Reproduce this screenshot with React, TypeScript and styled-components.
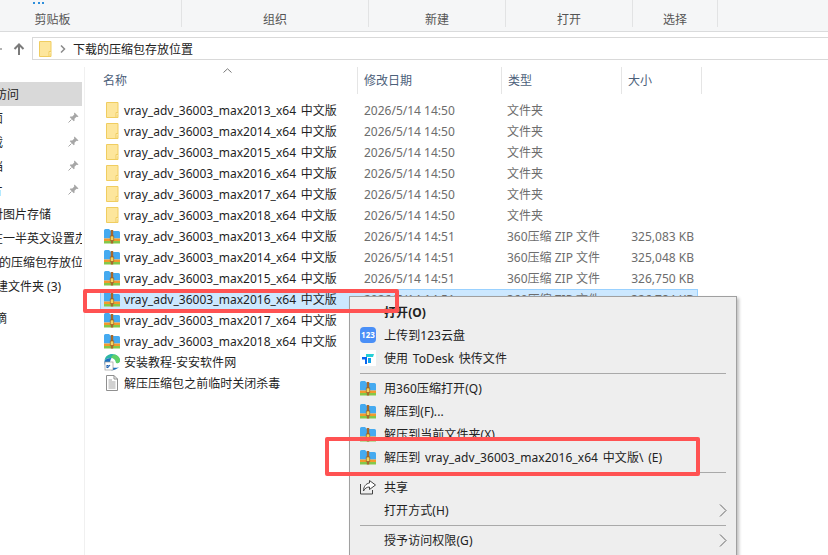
import React from "react";
import styled, { createGlobalStyle } from "styled-components";

const cjk = `"Noto Sans", "Noto Sans CJK SC", sans-serif`;

const folders = [2013, 2014, 2015, 2016, 2017, 2018];

// the last two rows lie under the context menu, so only their names show
const zips = [
    { year: 2013, date: "2026/5/14 14:51", type: "360压缩 ZIP 文件", size: "325,083 KB" },
    { year: 2014, date: "2026/5/14 14:51", type: "360压缩 ZIP 文件", size: "325,048 KB" },
    { year: 2015, date: "2026/5/14 14:51", type: "360压缩 ZIP 文件", size: "326,750 KB" },
    { year: 2016, date: "2026/5/14 14:51", type: "360压缩 ZIP 文件", size: "326,784 KB", selected: true },
    { year: 2017 },
    { year: 2018 },
];

const FolderIcon = () => (
    <svg width="16" height="16" viewBox="0 0 16 16">
        <path d="M2.500 .5H14V15.500H2.500Z" fill="#fde69c" stroke="#f0cd60" />
        <path d="M14 10.500H12V15.500" fill="#fff2c0" stroke="#f0cd60" />
    </svg>
);

const ZipIcon = () => (
    <svg width="16" height="16" viewBox="0 0 16 16">
        <path d="M0 2.500Q0 1 1.500 1H5L7 3H14.500Q16 3 16 4.500V10.500H0Z" fill="#45aaf0" />
        <rect y="10.500" width="16" height="2.500" fill="#f39a2b" />
        <rect y="13" width="16" height="2.500" fill="#84c84a" />
        <rect x="6.800" y="2" width="2.400" height="13.500" fill="#a8682a" />
        <rect x="6.200" y="8" width="3.600" height="4.500" fill="#f7d35e" stroke="#8a5420" strokeWidth=".6" />
    </svg>
);

const EdgeIcon = () => (
    <svg width="16" height="18" viewBox="0 0 16 18">
        <path d="M.5 8C1 3 4.500 1 8 1c4.500 0 8 3 8 6.500 0 2-2 3-4 2.500C12 7 10 5 7 5 4 5 1.500 6 .5 8Z" fill="#2fb6a6" />
        <path d="M7 5c3 0 5 2 5 5 2 .5 4-.5 4-2.500C16 5 14.500 3 12 2 10 1.500 8 2 7 5Z" fill="#5fd068" />
        <path d="M.5 8C0 12 2 16 6 17c3.500 .5 7-.5 9-3-3 1.500-7 1-8.500-1.500C5.500 10 6 7 7.500 5 4 5 1.500 6 .5 8Z" fill="#1a6fc0" />
        <rect x="1" y="9" width="8" height="8" fill="#fff" stroke="#9a9a9a" strokeWidth=".7" />
        <path d="M3 15v-2.500h1.500M3.500 15l2.500-3" fill="none" stroke="#1c5fb0" strokeWidth="1.100" />
    </svg>
);

const DocIcon = () => (
    <svg width="16" height="16" viewBox="0 0 16 16">
        <path d="M2.500 .5H10L13.500 4V15.500H2.500Z" fill="#fff" stroke="#8f8f8f" />
        <path d="M10 .5V4H13.500" fill="none" stroke="#8f8f8f" />
        <path d="M4.500 5H8M4.500 7H11.500M4.500 9H11.500M4.500 11H11.500M4.500 13H11.500" stroke="#a4a4a4" />
    </svg>
);

const PinIcon = () => (
    <svg width="11" height="11" viewBox="0 0 11 11">
        <path d="M6.500 .5 10.500 4.500 9.500 5 8.500 4.800 6.500 6.800 6.500 8.800 5.800 9.300 1.800 5.300 2.300 4.500 4.300 4.500 6.300 2.500 6 1.500Z" fill="#a6a6a6" />
        <path d="M3.500 7.500.5 10.500" stroke="#a6a6a6" />
    </svg>
);

const ToDeskIcon = () => (
    <svg width="16" height="16" viewBox="0 0 16 16">
        <rect width="16" height="16" fill="#fff" />
        <path d="M6 4H14L13 7H6Z" fill="#27cfd6" />
        <path d="M2 7H7V14H5V9.500H2Z" fill="#0a66f0" />
        <path d="M8 8H11V13H8Z" fill="#0fa2e8" />
    </svg>
);

const ShareIcon = () => (
    <svg width="17" height="16" viewBox="0 0 17 16">
        <path d="M.5 5V15H12.500V11" fill="none" stroke="#444" />
        <path d="M9.500 1.500 15.500 6 9.500 10.500V8C7 8 5 9 3.500 12 3.500 7.500 6 4.500 9.500 4Z" fill="#fff" stroke="#444" />
    </svg>
);

const Chevron = () => (
    <svg width="8" height="13" viewBox="0 0 8 13">
        <path d="M1 .5 7 6.500 1 12.500" fill="none" stroke="#666" />
    </svg>
);

const App = () => {
    return (
        <Page>
            <GlobalStyle />

            <Ribbon>
                <RibbonMark />
                <RibbonGroup $width={182} $padRight={76}>剪贴板</RibbonGroup>
                <RibbonGroup $width={187}>组织</RibbonGroup>
                <RibbonGroup $width={137}>新建</RibbonGroup>
                <RibbonGroup $width={127}>打开</RibbonGroup>
                <RibbonGroup $width={85}>选择</RibbonGroup>
            </Ribbon>

            <NavBar>
                <NavArrows>
                    <svg width="32" height="16" viewBox="0 0 32 16">
                        <path d="M0 8H2" stroke="#9a9a9a" strokeWidth="1.500" />
                        <path d="M19 14V3.500M14.500 8 19 3.500 23.500 8" fill="none" stroke="#7b7b7b" strokeWidth="2" />
                    </svg>
                </NavArrows>
                <AddressBox>
                    <FolderIcon />
                    <svg width="6" height="8" viewBox="0 0 6 8">
                        <path d="M1 .5 4.500 4 1 7.500" fill="none" stroke="#8a8a8a" strokeWidth="1.500" />
                    </svg>
                    <AddressText>下载的压缩包存放位置</AddressText>
                </AddressBox>
            </NavBar>

            <Main>
                <Sidebar>
                    <SideItem $offset={-29} $active>快速访问</SideItem>
                    <SideItem $offset={-21}>桌面<Pin><PinIcon /></Pin></SideItem>
                    <SideItem $offset={-21}>下载<Pin><PinIcon /></Pin></SideItem>
                    <SideItem $offset={-21}>文档<Pin><PinIcon /></Pin></SideItem>
                    <SideItem $offset={-21}>图片<Pin><PinIcon /></Pin></SideItem>
                    <SideItem $offset={-9}>对图片存储</SideItem>
                    <SideItem $offset={-9}>在一半英文设置办法</SideItem>
                    <SideItem $offset={-25}>下载的压缩包存放位置</SideItem>
                    <SideItem $offset={-4}>建文件夹 (3)</SideItem>
                    <SideGap />
                    <SideItem $offset={-5}>摘</SideItem>
                </Sidebar>

                <FileArea>
                    <HeaderRow>
                        <SortCaret>
                            <svg width="9" height="5" viewBox="0 0 9 5">
                                <path d="M.5 4.500 4.500 .8 8.500 4.500" fill="none" stroke="#777" />
                            </svg>
                        </SortCaret>
                        <HeaderCell $width={273} $pad={18}>名称</HeaderCell>
                        <HeaderCell $width={144} $pad={6}>修改日期</HeaderCell>
                        <HeaderCell $width={120} $pad={6}>类型</HeaderCell>
                        <HeaderCell $width={80} $pad={6}>大小</HeaderCell>
                    </HeaderRow>

                    <Rows>
                        {folders.map((year) => (
                            <FileRow key={year}>
                                <NameCell>
                                    <FolderIcon />
                                    <FileName>vray_adv_36003_max{year}_x64 中文版</FileName>
                                </NameCell>
                                <DateCell>2026/5/14 14:50</DateCell>
                                <TypeCell>文件夹</TypeCell>
                            </FileRow>
                        ))}
                        {zips.map((zip) => (
                            <FileRow key={zip.year} $selected={zip.selected}>
                                <NameCell>
                                    <ZipIcon />
                                    <FileName>vray_adv_36003_max{zip.year}_x64 中文版</FileName>
                                </NameCell>
                                <DateCell>{zip.date}</DateCell>
                                <TypeCell>{zip.type}</TypeCell>
                                <SizeCell>{zip.size}</SizeCell>
                            </FileRow>
                        ))}
                        <FileRow>
                            <NameCell>
                                <EdgeIcon />
                                <FileName>安装教程-安安软件网</FileName>
                            </NameCell>
                        </FileRow>
                        <FileRow>
                            <NameCell>
                                <DocIcon />
                                <FileName>解压压缩包之前临时关闭杀毒</FileName>
                            </NameCell>
                        </FileRow>
                    </Rows>
                </FileArea>
            </Main>

            <ContextMenu>
                <MenuItem $bold><MenuIcon />打开(O)</MenuItem>
                <MenuItem><MenuIcon><CloudBadge>123</CloudBadge></MenuIcon>上传到123云盘</MenuItem>
                <MenuItem><MenuIcon><ToDeskIcon /></MenuIcon>使用 ToDesk 快传文件</MenuItem>
                <MenuLine />
                <MenuItem><MenuIcon><ZipIcon /></MenuIcon>用360压缩打开(Q)</MenuItem>
                <MenuItem><MenuIcon><ZipIcon /></MenuIcon>解压到(F)...</MenuItem>
                <MenuItem><MenuIcon><ZipIcon /></MenuIcon>解压到当前文件夹(X)</MenuItem>
                <MenuItem><MenuIcon><ZipIcon /></MenuIcon>解压到 vray_adv_36003_max2016_x64 中文版\ (E)</MenuItem>
                <MenuLine />
                <MenuItem><MenuIcon><ShareIcon /></MenuIcon>共享</MenuItem>
                <MenuItem>
                    <MenuIcon />打开方式(H)
                    <MenuArrow><Chevron /></MenuArrow>
                </MenuItem>
                <MenuLine />
                <MenuItem>
                    <MenuIcon />授予访问权限(G)
                    <MenuArrow><Chevron /></MenuArrow>
                </MenuItem>
            </ContextMenu>

            <RowHighlight />
            <MenuHighlight />
        </Page>
    );
};

const GlobalStyle = createGlobalStyle`
    html, body {
        margin: 0;
        padding: 0;
        background: #ffffff;
    }
`;

const Page = styled.div`
    width: 828px;
    height: 555px;
    overflow: hidden;
    position: relative;

    color: #333333;
    font-family: ${cjk};
    font-size: 12px;
`;

const Ribbon = styled.div`
    height: 27px;
    padding-bottom: 4px;

    display: flex;
    position: relative;

    background: #f5f6f7;
    border-bottom: 1px solid #dadbdc;
`;

const RibbonMark = styled.div`
    width: 11px;
    height: 2px;

    position: absolute;
    left: 33px;
    top: 0;

    border-bottom: 2px dotted #2f8fdc;
`;

const RibbonGroup = styled.div<{ $width: number; $padRight?: number }>`
    width: ${(p) => p.$width}px;
    height: 27px;
    box-sizing: border-box;
    padding-right: ${(p) => p.$padRight ?? 0}px;
    padding-top: 11px;

    display: flex;
    justify-content: center;
    align-items: center;

    border-right: 1px solid #e2e3e4;
    color: #555555;
`;

const NavBar = styled.div`
    height: 35px;
    box-sizing: border-box;
    padding-top: 5px;

    display: flex;
`;

const NavArrows = styled.div`
    width: 32px;
    height: 23px;

    display: flex;
    align-items: center;
`;

const AddressBox = styled.div`
    flex: 1;
    height: 23px;
    box-sizing: border-box;
    padding-left: 4px;

    display: flex;
    align-items: center;
    gap: 7px;

    border: 1px solid #d9d9d9;
    border-right: none;
`;

const AddressText = styled.span`
    color: #222222;
`;

const Main = styled.div`
    display: flex;
    flex: 1;
`;

const Sidebar = styled.div`
    width: 85px;
    height: 488px;
    box-sizing: border-box;
    padding-top: 15px;

    border-right: 1px solid #f0f0f0;
    overflow: hidden;
    flex-shrink: 0;
`;

const SideItem = styled.div<{ $offset: number; $active?: boolean }>`
    width: 82px;
    height: 24px;
    overflow: hidden;

    display: flex;
    align-items: center;
    position: relative;

    background: ${(p) => (p.$active ? "#d9d9d9" : "transparent")};
    color: #222222;
    text-indent: ${(p) => p.$offset}px;
    white-space: nowrap;
`;

const SideGap = styled.div`
    height: 8px;
`;

const Pin = styled.span`
    position: absolute;
    right: 3px;
    top: 6px;
    line-height: 0;
    text-indent: 0;
`;

const FileArea = styled.div`
    flex: 1;
    min-width: 0;
`;

const HeaderRow = styled.div`
    height: 33px;
    box-sizing: border-box;
    padding-bottom: 6px;

    display: flex;
    position: relative;
`;

const SortCaret = styled.div`
    position: absolute;
    left: 138px;
    top: 1px;
    line-height: 0;
`;

const HeaderCell = styled.div<{ $width: number; $pad: number }>`
    width: ${(p) => p.$width}px;
    box-sizing: border-box;
    padding-left: ${(p) => p.$pad}px;
    padding-bottom: 2px;

    display: flex;
    align-items: center;

    border-right: 1px solid #e5e5e5;
    color: #4c607a;
`;

const Rows = styled.div`
    margin-left: 15px;
    width: 598px;
`;

const FileRow = styled.div<{ $selected?: boolean }>`
    height: 21px;
    box-sizing: border-box;
    padding-bottom: 1px;

    display: flex;
    align-items: center;

    background: ${(p) => (p.$selected ? "#cce8ff" : "transparent")};
    box-shadow: ${(p) => (p.$selected ? "inset 0 0 0 1px #99d1ff" : "none")};
    white-space: nowrap;
`;

const NameCell = styled.div`
    width: 257px;
    padding-left: 4px;
    box-sizing: border-box;

    display: flex;
    align-items: center;
    gap: 4px;
`;

const FileName = styled.span`
    color: #1f1f1f;
    letter-spacing: 0.03px;
    word-spacing: 1.5px;
`;

const DateCell = styled.div`
    width: 143px;
    padding-left: 7px;
    box-sizing: border-box;
    color: #6d6d6d;
`;

const TypeCell = styled.div`
    width: 120px;
    padding-left: 7px;
    box-sizing: border-box;
    color: #6d6d6d;
`;

const SizeCell = styled.div`
    width: 74px;
    text-align: right;
    color: #6d6d6d;
`;

const ContextMenu = styled.div`
    width: 388px;
    height: 270px;
    box-sizing: border-box;
    padding: 4px 0 0 1px;

    position: absolute;
    left: 349px;
    top: 296px;

    background: #eeeeee;
    border: 1px solid #a0a0a0;
    box-shadow: 2px 2px 3px rgba(0, 0, 0, 0.25);
`;

const MenuItem = styled.div<{ $bold?: boolean }>`
    height: 23px;
    box-sizing: border-box;
    padding-bottom: 1px;

    display: flex;
    align-items: center;
    position: relative;

    color: #222222;
    font-weight: ${(p) => (p.$bold ? 700 : 400)};
    letter-spacing: 0.07px;
    word-spacing: 1.5px;
    white-space: nowrap;
`;

const MenuIcon = styled.span`
    width: 16px;
    height: 16px;
    margin-left: 9px;
    margin-right: 8px;
    line-height: 0;
    flex-shrink: 0;
`;

const CloudBadge = styled.span`
    width: 16px;
    height: 16px;
    border-radius: 4px;

    display: flex;
    align-items: center;
    justify-content: center;

    background: #4a8ff7;
    color: #ffffff;
    font-size: 8px;
    font-weight: 700;
    line-height: 16px;
`;

const MenuLine = styled.div`
    height: 1px;
    margin: 3px 10px 3px 9px;
    background: #a9a9a9;
`;

const MenuArrow = styled.span`
    position: absolute;
    right: 9px;
    top: 5px;
    line-height: 0;
`;

const RowHighlight = styled.div`
    width: 316px;
    height: 24px;
    box-sizing: border-box;

    position: absolute;
    left: 83px;
    top: 289px;

    border: 4px solid #ff5252;
    border-radius: 2px;
`;

const MenuHighlight = styled.div`
    width: 375px;
    height: 39px;
    box-sizing: border-box;

    position: absolute;
    left: 325px;
    top: 437px;

    border: 4px solid #ff5252;
    border-radius: 2px;
`;

export default App;
